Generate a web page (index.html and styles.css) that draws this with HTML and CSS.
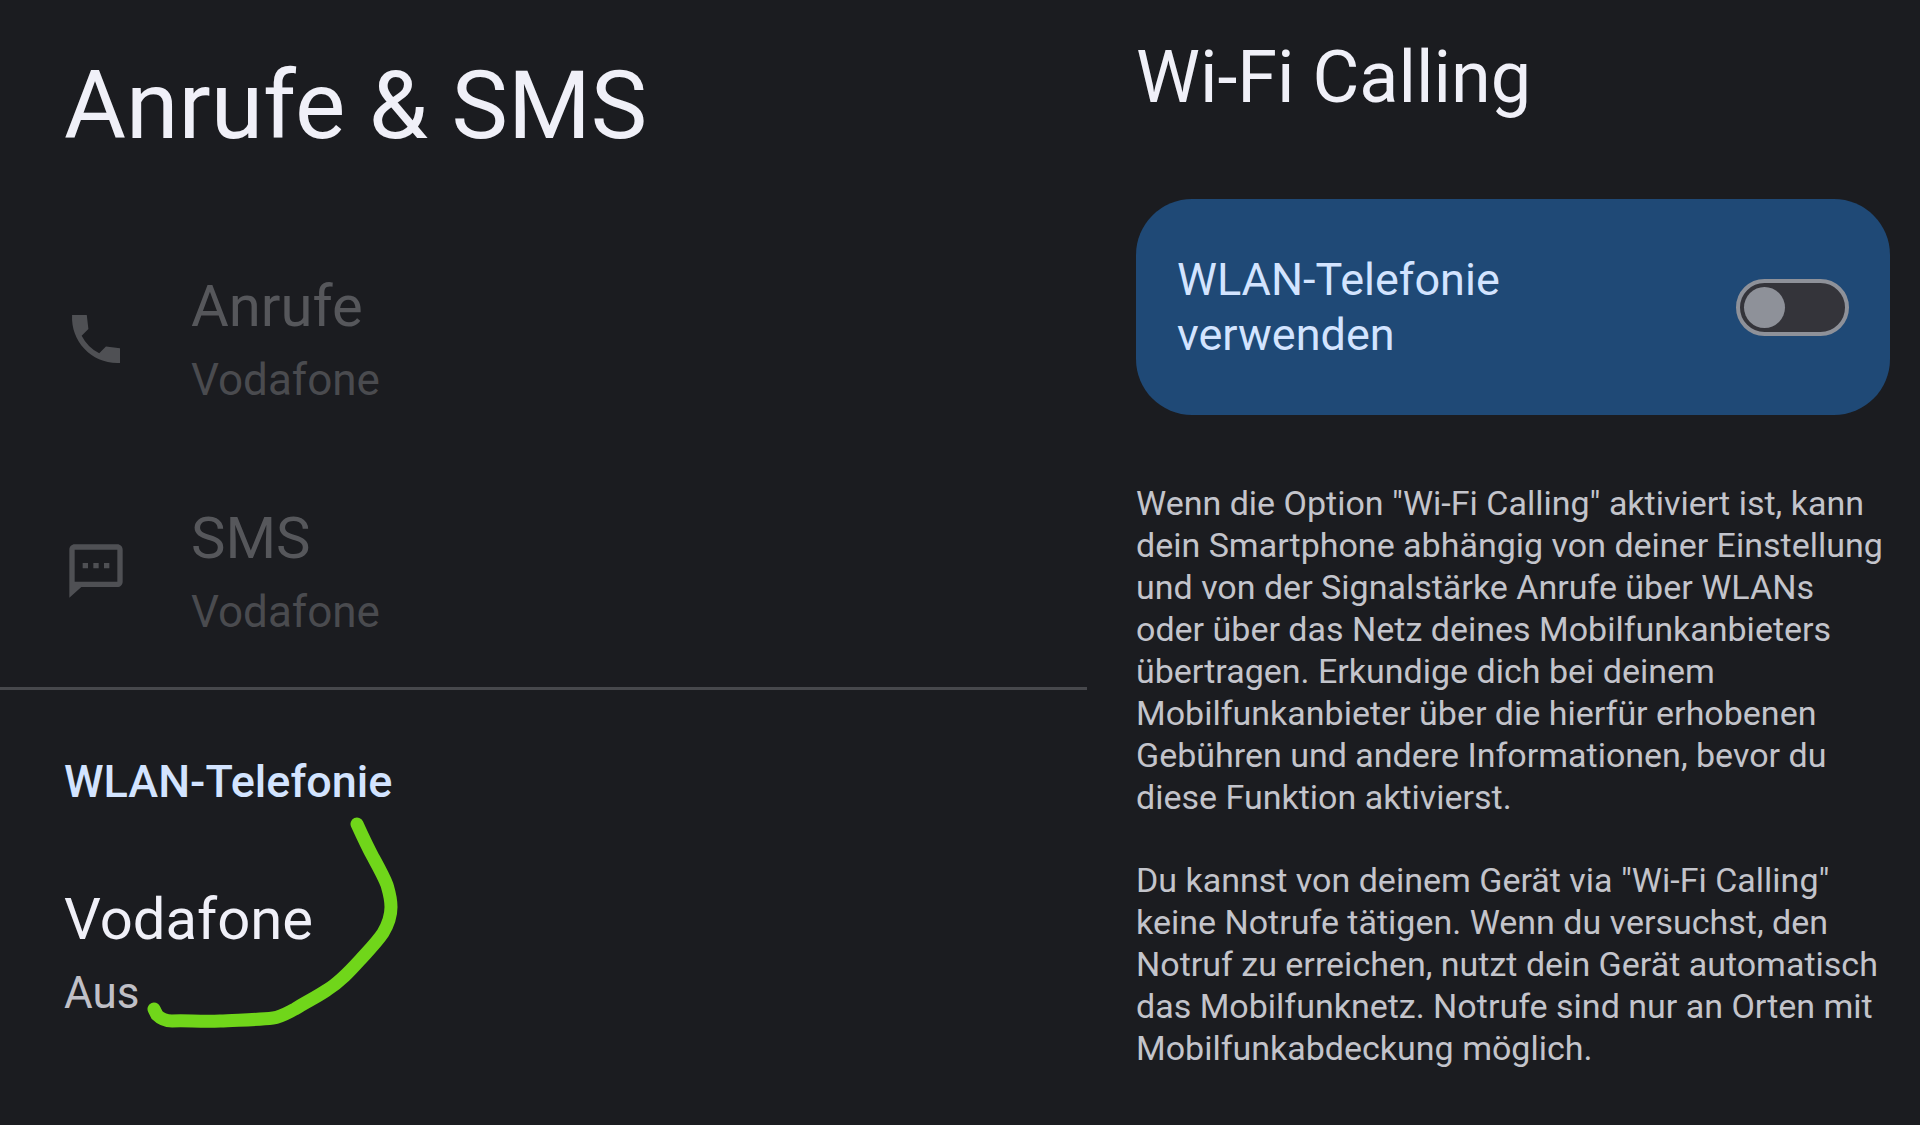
FILE: index.html
```html
<!DOCTYPE html>
<html lang="de">
<head>
<meta charset="utf-8">
<meta name="viewport" content="width=device-width, initial-scale=1">
<title>Anrufe &amp; SMS</title>
<link rel="stylesheet" href="styles.css">
</head>
<body>
<main class="layout">
  <section class="pane">
    <h1 class="pane-title">Anrufe &amp; SMS</h1>
    <div class="rows">
      <button class="row" type="button" disabled>
        <svg class="row-icon" viewBox="0 0 24 24" aria-hidden="true"><path d="M21 15.460l-5.270-.61-2.520 2.520a15.045 15.045 0 0 1-6.590-6.590l2.530-2.530L8.540 3H3.030C2.450 13.180 10.820 21.550 21 20.970v-5.510z"/></svg>
        <span class="row-text"><span class="row-title">Anrufe</span><span class="row-sub">Vodafone</span></span>
      </button>
      <button class="row" type="button" disabled>
        <svg class="row-icon" viewBox="0 0 24 24" aria-hidden="true"><path d="M20 2H4c-1.100 0-2 .9-2 2v18l4.500-4H20c1.100 0 2-.9 2-2V4c0-1.100-.9-2-2-2zm0 14H4V4h16v12zM7 9h2v2H7zm4 0h2v2h-2zm4 0h2v2h-2z"/></svg>
        <span class="row-text"><span class="row-title">SMS</span><span class="row-sub">Vodafone</span></span>
      </button>
    </div>
    <div class="wlan">
      <h2 class="wlan-label">WLAN-Telefonie</h2>
      <button class="row row-plain" type="button">
        <span class="row-text"><span class="row-title">Vodafone</span><span class="row-sub">Aus</span></span>
      </button>
      <svg class="marker" viewBox="0 0 260 220" aria-hidden="true"><path d="M207 14C212 25 217 36 223 47C229 58 234 67 237 75C239 82 241 88 241 97C241 106 239 113 233 123C227 132 219 140 210 150C200 161 190 172 177 180C165 188 156 192 145 199C137 203 131 207 123 208C107 210 85 210 70 211C50 212 35 210 22 211Q13 211 7 205L4 199"/></svg>
    </div>
  </section>
  <section class="pane pane-detail">
    <h1 class="detail-title">Wi-Fi Calling</h1>
    <label class="card" for="wlan-switch">
      <span class="card-text">WLAN-Telefonie verwenden</span>
      <input class="switch" id="wlan-switch" type="checkbox" role="switch">
    </label>
    <p class="info">Wenn die Option "Wi-Fi Calling" aktiviert ist, kann dein Smartphone abhängig von deiner Einstellung und von der Signalstärke Anrufe über WLANs oder über das Netz deines Mobilfunkanbieters übertragen. Erkundige dich bei deinem Mobilfunkanbieter über die hierfür erhobenen Gebühren und andere Informationen, bevor du diese Funktion aktivierst.</p>
    <p class="info">Du kannst von deinem Gerät via "Wi-Fi Calling" keine Notrufe tätigen. Wenn du versuchst, den Notruf zu erreichen, nutzt dein Gerät automatisch das Mobilfunknetz. Notrufe sind nur an Orten mit Mobilfunkabdeckung möglich.</p>
  </section>
</main>
</body>
</html>
```
FILE: styles.css
```css
* {
  box-sizing: border-box;
}

body {
  margin: 0;
  background: #1b1c20;
  color: #f0f0f8;
  font-family: Roboto, "Noto Sans", sans-serif;
}

h1,
h2,
p {
  margin: 0;
  font-weight: 400;
}

.layout {
  display: grid;
  grid-template-columns: minmax(0, 1087fr) minmax(0, 833fr);
  min-height: 100vh;
}

.pane-title {
  padding: 50px 64px 61px;
  font-size: 95px;
  line-height: 112px;
}

.rows {
  border-bottom: 3px solid #47484c;
}

.row {
  display: flex;
  align-items: center;
  gap: 63px;
  width: 100%;
  padding: 49px 64px;
  border: 0;
  background: none;
  color: #f0f0f8;
  font: inherit;
  text-align: left;
}

.row:disabled {
  color: #56575b;
}

.row-icon {
  flex: none;
  width: 64px;
  height: 64px;
  fill: #4f5054;
}

.row-text {
  display: flex;
  flex-direction: column;
  gap: 14px;
}

.row-title {
  font-size: 58px;
  line-height: 68px;
}

.row-sub {
  color: #c0c0c7;
  font-size: 44px;
  line-height: 52px;
}

.row:disabled .row-sub {
  color: #4a4b4f;
}

.wlan {
  position: relative;
  padding-top: 66px;
}

.wlan-label {
  padding: 0 64px;
  color: #d3e4ff;
  font-size: 45px;
  font-weight: 500;
  line-height: 52px;
}

.row-plain {
  padding-top: 77px;
}

/* hand-drawn stroke over the settings */
.marker {
  position: absolute;
  top: 120px;
  left: 150px;
  width: 260px;
  height: 220px;
  overflow: visible;
  fill: none;
  stroke: #70d61a;
  stroke-width: 13px;
  stroke-linecap: round;
  stroke-linejoin: round;
  pointer-events: none;
}

.pane-detail {
  padding: 36px 30px 40px 49px;
}

.detail-title {
  font-size: 72px;
  line-height: 84px;
}

.card {
  display: flex;
  align-items: center;
  justify-content: space-between;
  margin: 79px 0 67px;
  padding: 53px 41px;
  border-radius: 56px;
  background: #1f4976;
  color: #d3e4ff;
}

.card-text {
  max-width: 400px;
  font-size: 45px;
  line-height: 55px;
}

.switch {
  display: flex;
  align-items: center;
  flex: none;
  width: 113px;
  height: 57px;
  margin: 0;
  padding: 0 4px;
  border: 4px solid #8e9199;
  border-radius: 29px;
  background: #34343a;
  appearance: none;
}

.switch::before {
  content: "";
  width: 41px;
  height: 41px;
  border-radius: 50%;
  background: #8e9199;
}

.switch:checked {
  justify-content: flex-end;
}

.info {
  color: #c3c4cb;
  font-size: 34px;
  line-height: 42px;
}

.info + .info {
  margin-top: 41px;
}
```
